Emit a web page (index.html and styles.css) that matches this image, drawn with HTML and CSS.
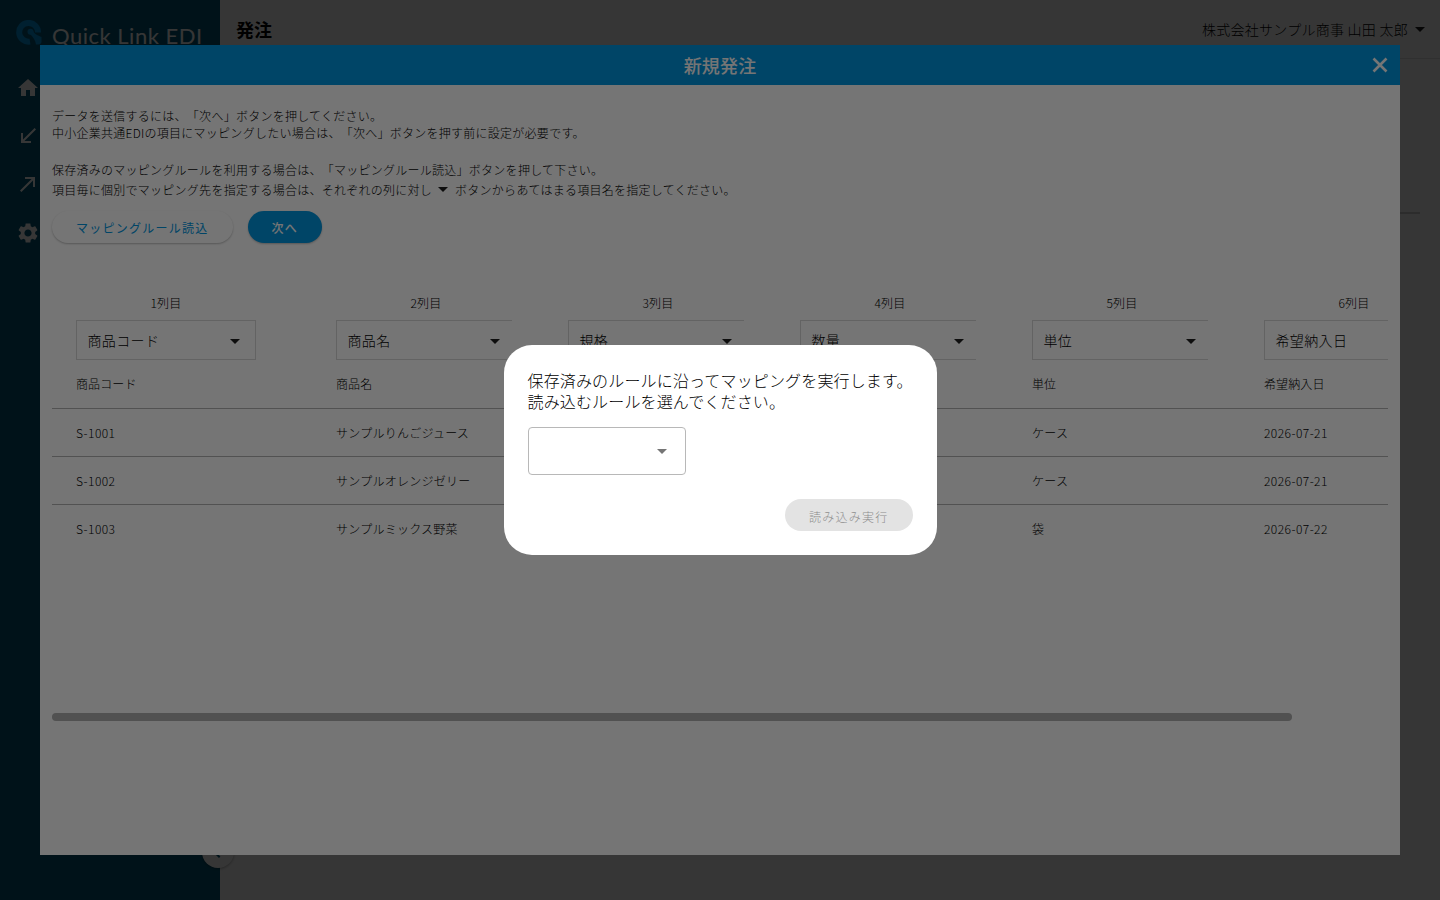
FILE: index.html
```html
<!DOCTYPE html>
<html lang="ja">
<head>
    <meta charset="UTF-8">
    <meta name="viewport" content="width=device-width, initial-scale=1.0">
    <title>Quick Link EDI</title>
    <link rel="stylesheet" href="styles.css">
</head>
<body>
    <div class="app">
        <nav class="sidebar">
            <div class="logo">
                <svg class="logo-mark" viewBox="0 0 26 25">
                    <path class="ring" d="M22 12.500A9.400 9.400 0 1 0 14 21.600"/>
                    <circle cx="14.500" cy="11.800" r="3"/>
                    <path d="M13.500 13.500L17 10.800C18 14 22 15.500 25.500 17V22Q25 24.500 22 24.500H20C19.500 20 17 17 13.500 13.500Z"/>
                </svg>
                <span class="logo-text">Quick Link EDI</span>
            </div>
            <div class="menu">
                <svg viewBox="0 0 24 24"><path d="M10 20v-6h4v6h5v-8h3L12 3 2 12h3v8z"/></svg>
                <svg viewBox="0 0 24 24"><path d="M20 5.410L18.590 4 7 15.590V9H5v10h10v-2H8.410z"/></svg>
                <svg viewBox="0 0 24 24"><path d="M9 5v2h6.590L4 18.590 5.410 20 17 8.410V15h2V5z"/></svg>
                <svg viewBox="0 0 24 24"><path d="M19.140 12.940c.04-.3.06-.61.06-.94 0-.32-.02-.64-.07-.94l2.030-1.580c.18-.14.23-.41.12-.61l-1.920-3.320c-.12-.22-.37-.29-.59-.22l-2.390.96c-.5-.38-1.030-.7-1.620-.94l-.36-2.540c-.04-.24-.24-.41-.48-.41h-3.840c-.24 0-.43.17-.47.41l-.36 2.540c-.59.24-1.130.57-1.620.94l-2.390-.96c-.22-.08-.47 0-.59.22L2.740 8.870c-.12.21-.08.47.12.61l2.030 1.580c-.05.3-.09.63-.09.94s.02.64.07.94l-2.030 1.580c-.18.14-.23.41-.12.61l1.920 3.320c.12.22.37.29.59.22l2.390-.96c.5.38 1.030.7 1.620.94l.36 2.540c.05.24.24.41.48.41h3.840c.24 0 .44-.17.47-.41l.36-2.540c.59-.24 1.130-.56 1.620-.94l2.390.96c.22.08.47 0 .59-.22l1.920-3.320c.12-.22.07-.47-.12-.61l-2.010-1.580zM12 15.600c-1.980 0-3.600-1.620-3.600-3.600s1.620-3.600 3.600-3.600 3.600 1.620 3.600 3.600-1.620 3.600-3.600 3.600z"/></svg>
            </div>
            <div class="toggle">
                <svg viewBox="0 0 24 24"><path d="M15.410 7.410L14 6l-6 6 6 6 1.410-1.410L10.830 12z"/></svg>
            </div>
        </nav>
        <main class="main">
            <header class="appbar">
                <h1>発注</h1>
                <div class="account">株式会社サンプル商事 山田 太郎<i class="caret"></i></div>
            </header>
            <div class="divider"></div>
        </main>
    </div>

    <div class="overlay">
        <section class="order">
            <header class="order-header">
                <span></span>
                <h2>新規発注</h2>
                <svg class="close" viewBox="0 0 24 24"><path d="M5.500 5.500L18.500 18.500M18.500 5.500L5.500 18.500"/></svg>
            </header>
            <div class="order-body">
                <div class="guide">
                    <p>データを送信するには、「次へ」ボタンを押してください。</p>
                    <p>中小企業共通EDIの項目にマッピングしたい場合は、「次へ」ボタンを押す前に設定が必要です。</p>
                    <p class="rule">保存済みのマッピングルールを利用する場合は、「マッピングルール読込」ボタンを押して下さい。</p>
                    <p class="each">項目毎に個別でマッピング先を指定する場合は、それぞれの列に対し<i class="caret"></i>ボタンからあてはまる項目名を指定してください。</p>
                </div>
                <div class="actions">
                    <button class="btn">マッピングルール読込</button>
                    <button class="btn primary">次へ</button>
                </div>
                <div class="table-scroll">
                    <div class="table">
                        <div class="row selects">
                            <div class="col"><span>1列目</span><div class="select full">商品コード<i class="caret"></i></div></div>
                            <div class="col"><span>2列目</span><div class="select">商品名<i class="caret"></i></div></div>
                            <div class="col"><span>3列目</span><div class="select">規格<i class="caret"></i></div></div>
                            <div class="col"><span>4列目</span><div class="select">数量<i class="caret"></i></div></div>
                            <div class="col"><span>5列目</span><div class="select">単位<i class="caret"></i></div></div>
                            <div class="col"><span>6列目</span><div class="select">希望納入日<i class="caret"></i></div></div>
                        </div>
                        <div class="row head"><span>商品コード</span><span>商品名</span><span></span><span></span><span>単位</span><span>希望納入日</span></div>
                        <div class="row"><span class="num">S-1001</span><span>サンプルりんごジュース</span><span></span><span></span><span>ケース</span><span class="num">2026-07-21</span></div>
                        <div class="row"><span class="num">S-1002</span><span>サンプルオレンジゼリー</span><span></span><span></span><span>ケース</span><span class="num">2026-07-21</span></div>
                        <div class="row"><span class="num">S-1003</span><span>サンプルミックス野菜</span><span></span><span></span><span>袋</span><span class="num">2026-07-22</span></div>
                    </div>
                </div>
                <div class="scrollbar"></div>
            </div>
        </section>
    </div>

    <div class="overlay">
        <section class="dialog">
            <p class="dialog-text">保存済みのルールに沿ってマッピングを実行します。<br>読み込むルールを選んでください。</p>
            <div class="rule-select"><i class="caret"></i></div>
            <button class="btn disabled" disabled>読み込み実行</button>
        </section>
    </div>
</body>
</html>
```

FILE: styles.css
```css
* {
    box-sizing: border-box;
}
body {
    margin: 0;
    height: 100vh;
    overflow: hidden;
    font-family: "Noto Sans CJK JP", sans-serif;
    font-weight: 300;
    font-size: 12px;
    letter-spacing: 0.26px;
    text-spacing-trim: space-all;
    color: #000;
}
h1, h2, p {
    margin: 0;
}
.app {
    display: flex;
    height: 100vh;
}
.sidebar {
    position: relative;
    width: 220px;
    background: #005877;
    padding: 20px 16px;
}
.logo {
    display: flex;
    align-items: flex-start;
    gap: 10px;
    height: 56px;
}
.logo-mark {
    flex-shrink: 0;
    width: 26px;
    height: 25px;
    fill: #0096e0;
}
.logo-mark .ring {
    fill: none;
    stroke: #0096e0;
    stroke-width: 6;
}
.logo-text {
    font-family: Lato, sans-serif;
    font-weight: 400;
    font-size: 22px;
    line-height: 26px;
    letter-spacing: 0.5px;
    padding-top: 3px;
    color: #fff;
    white-space: nowrap;
}
.menu {
    display: flex;
    flex-direction: column;
    gap: 24.2px;
}
.menu svg {
    width: 24px;
    height: 24px;
    fill: #fff;
}
.toggle {
    position: absolute;
    left: 202px;
    top: 836px;
    width: 32px;
    height: 32px;
    padding: 4px 3px;
    border-radius: 50%;
    background: #fff;
    box-shadow: 0 1px 3px rgba(0, 0, 0, 0.3);
}
.toggle svg {
    width: 24px;
    height: 24px;
    fill: #005877;
}
.main {
    flex: 1;
    background: #fff;
}
.appbar {
    display: flex;
    justify-content: space-between;
    align-items: center;
    height: 59px;
    padding: 0 15px 0 16px;
    border-bottom: 1px solid #e0e0e0;
}
.appbar h1 {
    font-size: 18px;
    font-weight: 700;
    letter-spacing: 0;
}
.account {
    display: flex;
    align-items: center;
    gap: 7px;
    font-size: 14px;
}
.caret {
    display: inline-block;
    border: 5px solid transparent;
    border-top-color: #1f1f1f;
    border-bottom: 0;
}
.divider {
    height: 2px;
    margin: 153px 20px 0;
    background: #cfcfcf;
}
.overlay {
    position: fixed;
    inset: 0;
    display: flex;
    align-items: center;
    justify-content: center;
    background: rgba(0, 0, 0, 0.54);
}
.order {
    width: 1360px;
    height: 810px;
    background: #fff;
}
.order-header {
    display: grid;
    grid-template-columns: 24px 1fr 24px;
    align-items: center;
    height: 40px;
    padding: 0 8px;
    background: #0096e0;
    color: #fff;
}
.order-header h2 {
    font-size: 18px;
    font-weight: 500;
    letter-spacing: 0.15px;
    text-align: center;
}
.close {
    width: 24px;
    height: 24px;
    stroke: #fff;
    stroke-width: 2.6;
}
.order-body {
    padding: 22px 12px 0;
}
.guide p {
    height: 17px;
    line-height: 17px;
    white-space: nowrap;
}
.guide .rule {
    margin-top: 20px;
}
.guide .each {
    display: flex;
    align-items: center;
    margin-top: 3px;
}
.guide .caret {
    margin: 0 7px 0 6px;
}
.actions {
    display: flex;
    gap: 15px;
    margin-top: 13px;
}
.btn {
    height: 32px;
    padding: 0 24px;
    border: none;
    border-radius: 16px;
    background: #fff;
    box-shadow: 0 1px 2px rgba(0, 0, 0, 0.25);
    color: #0096e0;
    font-family: inherit;
    font-size: 12px;
    font-weight: 400;
    letter-spacing: 1.25px;
}
.btn.primary {
    background: #0096e0;
    color: #fff;
    font-weight: 500;
}
.btn.disabled {
    padding-top: 2px;
    background: #e3e3e3;
    box-shadow: none;
    color: #8c8c8c;
    font-weight: 300;
}
.table-scroll {
    height: 420px;
    margin-top: 50px;
    overflow: hidden;
}
.table {
    width: 1460px;
}
.row {
    display: grid;
    grid-template-columns: 260px repeat(5, 232px);
    align-items: center;
    height: 48px;
    padding-left: 24px;
    border-top: 1px solid #b4b4b4;
}
.row.selects {
    height: 67px;
    border-top: 0;
    align-items: start;
}
.row.head {
    border-top: 0;
    padding-bottom: 1px;
    letter-spacing: 0.1px;
}
.num {
    letter-spacing: 0.45px;
}
.col span {
    display: block;
    width: 180px;
    height: 27px;
    line-height: 20px;
    text-align: center;
}
.select {
    display: flex;
    align-items: center;
    justify-content: space-between;
    width: 176px;
    height: 40px;
    padding: 0 12px 1px 10.5px;
    border: 1px solid #d8d8d8;
    border-right: 0;
    font-size: 14px;
    letter-spacing: 0.35px;
}
.select .caret {
    margin-top: 3px;
}
.select.full {
    width: 180px;
    padding-right: 15px;
    border-right: 1px solid #d8d8d8;
}
.scrollbar {
    width: 1239.5px;
    height: 8px;
    border-radius: 4px;
    background: #b0b0b0;
}
.dialog {
    display: flex;
    flex-direction: column;
    width: 433px;
    height: 210px;
    padding: 25px 24px 24px;
    border-radius: 28px;
    background: #fff;
}
.dialog-text {
    font-size: 16px;
    line-height: 21px;
    letter-spacing: 0.15px;
    white-space: nowrap;
}
.rule-select {
    display: flex;
    align-items: center;
    justify-content: flex-end;
    width: 158px;
    height: 48px;
    margin-top: 15px;
    padding-right: 18px;
    border: 1px solid #b8b8b8;
    border-radius: 4px;
}
.rule-select .caret {
    border-top-color: #757575;
}
.dialog .btn {
    align-self: flex-end;
    margin-top: auto;
}
```
